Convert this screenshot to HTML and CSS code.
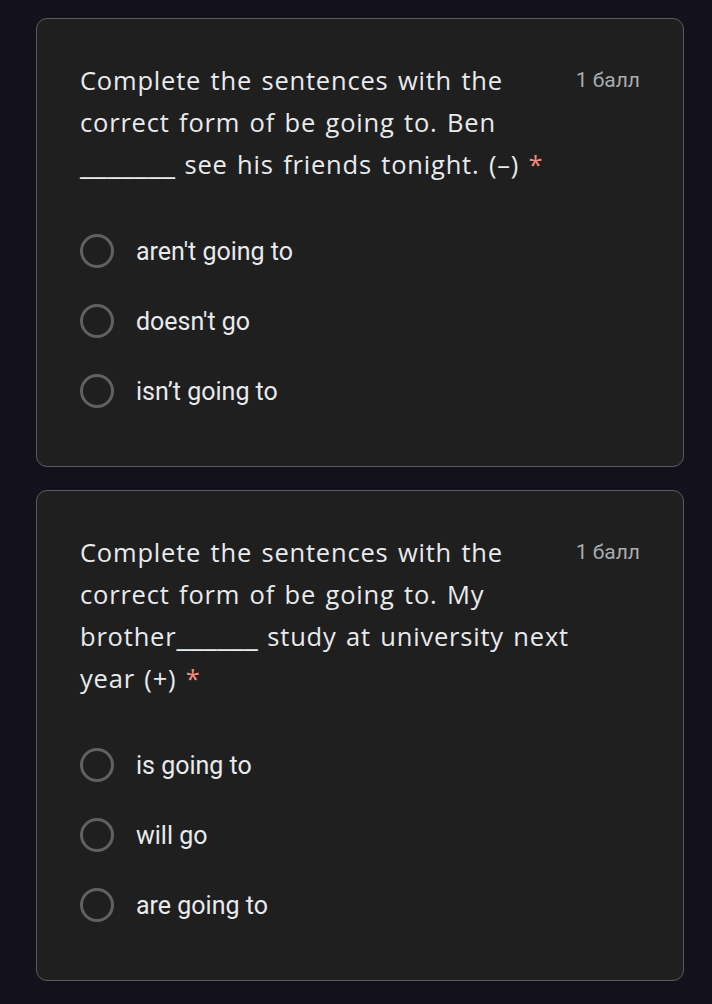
FILE: index.html
```html
<!DOCTYPE html>
<html>
<head>
<meta charset="utf-8">
<link rel="stylesheet" href="styles.css">
</head>
<body>
<main class="page">
  <section class="card">
    <div class="head">
      <div class="title">Complete the sentences with the correct form of be going to. Ben <span class="blank">_______</span> see his friends tonight. (–) <span class="req">*</span></div>
      <div class="points">1 балл</div>
    </div>
    <div class="options">
      <label class="opt"><span class="radio"></span><span class="opt-text">aren't going to</span></label>
      <label class="opt"><span class="radio"></span><span class="opt-text">doesn't go</span></label>
      <label class="opt"><span class="radio"></span><span class="opt-text">isn’t going to</span></label>
    </div>
  </section>
  <section class="card">
    <div class="head">
      <div class="title">Complete the sentences with the correct form of be going to. My brother<span class="blank">______</span> study at university next year (+) <span class="req">*</span></div>
      <div class="points">1 балл</div>
    </div>
    <div class="options">
      <label class="opt"><span class="radio"></span><span class="opt-text">is going to</span></label>
      <label class="opt"><span class="radio"></span><span class="opt-text">will go</span></label>
      <label class="opt"><span class="radio"></span><span class="opt-text">are going to</span></label>
    </div>
  </section>
</main>
</body>
</html>
```

FILE: styles.css
```css
html, body {
  margin: 0;
  padding: 0;
  background: #13121c;
}
.page {
  padding: 18px 28px 0 36px;
  display: flex;
  flex-direction: column;
  gap: 23px;
}
.card {
  background: #1f1f1f;
  border: 1.5px solid #5c5c60;
  border-radius: 11px;
  padding: 40px 43px 40px 43px;
  display: flex;
  flex-direction: column;
  gap: 31px;
}
.head {
  display: flex;
  justify-content: space-between;
  align-items: flex-start;
}
.title {
  font-family: "Open Sans", sans-serif;
  font-size: 25.5px;
  line-height: 42px;
  color: #e8eaed;
  width: 490px;
  flex: none;
  letter-spacing: 0.8px;
  word-spacing: 2px;
}
.blank {
  letter-spacing: 0;
  font-size: 31px;
  line-height: 1;
  word-spacing: 0;
}
.req {
  color: #f28b82;
}
.points {
  font-family: Roboto, sans-serif;
  font-size: 21px;
  line-height: 42px;
  color: #a8abb0;
}
.options {
  display: flex;
  flex-direction: column;
}
.opt {
  height: 70px;
  display: flex;
  align-items: center;
  gap: 22px;
}
.radio {
  width: 28px;
  height: 28px;
  border: 3px solid #5f6163;
  border-radius: 50%;
  flex: none;
}
.opt-text {
  font-family: Roboto, sans-serif;
  font-size: 25px;
  color: #e8eaed;
}
```
